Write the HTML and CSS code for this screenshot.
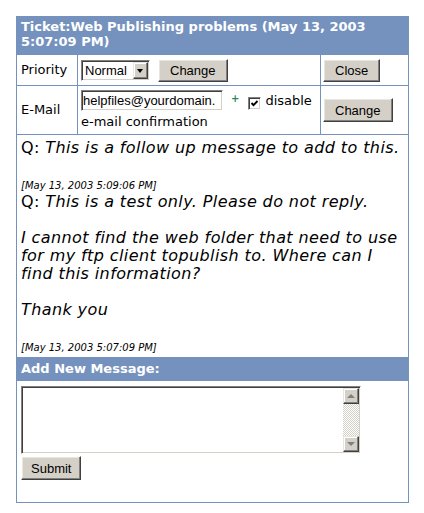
FILE: index.html
```html
<!DOCTYPE html>
<html>
    <head>
        <meta charset="UTF-8">
        <meta name="viewport" content="width=device-width, initial-scale=1.0">
        <title>Ticket</title>
        <link rel="stylesheet" href="styles.css">
    </head>
    <body>
        <div class="ticket">
            <div class="ticket-head">Ticket:Web Publishing problems (May 13, 2003 5:07:09 PM)</div>

            <div class="ticket-props">
                <div class="prop-cell prop-label">Priority</div>
                <div class="prop-cell prop-value">
                    <span class="select-wrap">
                        <select class="field-select" name="priority">
                            <option>Normal</option>
                            <option>High</option>
                            <option>Low</option>
                        </select>
                        <span class="select-arrow"></span>
                    </span>
                    <button class="btn" type="button">Change</button>
                </div>
                <div class="prop-cell prop-action"><button class="btn" type="button">Close</button></div>

                <div class="prop-cell prop-label">E-Mail</div>
                <div class="prop-cell prop-email"><input class="field-text" type="text" name="email" value="helpfiles@yourdomain.com"><span class="add-mark">+</span><span class="check"><svg width="9" height="9" viewBox="0 0 9 9"><polyline points="1.5,4 3.5,6.2 7.5,2" fill="none" stroke="#000" stroke-width="1.9"/></svg></span>disable e-mail confirmation</div>
                <div class="prop-cell prop-action"><button class="btn btn-tall" type="button">Change</button></div>
            </div>

            <div class="messages">
                Q: <i>This is a follow up message to add to this.</i><br><br>
                <span class="stamp">[May 13, 2003 5:09:06 PM]</span><br>
                Q: <i>This is a test only. Please do not reply.<br><br>I cannot find the web folder that need to use for my ftp client topublish to. Where can I find this information?<br><br>Thank you</i><br><br>
                <span class="stamp">[May 13, 2003 5:07:09 PM]</span>
            </div>

            <div class="ticket-head ticket-head-sub">Add New Message:</div>

            <div class="reply">
                <div class="reply-box">
                    <textarea class="reply-text" name="message"></textarea>
                    <div class="scrollbar">
                        <span class="scroll-btn scroll-up"></span>
                        <span class="scroll-track"></span>
                        <span class="scroll-btn scroll-down"></span>
                    </div>
                </div>
                <button class="btn btn-submit" type="submit">Submit</button>
            </div>
        </div>
    </body>
</html>
```

FILE: styles.css
```css
body{
    margin: 0;
    background: #fff;
    color: #000;
    font-family: "DejaVu Sans", Verdana, sans-serif;
    font-size: 13px;
}
.ticket{
    width: 393px;
    margin: 16px;
    border: 1px solid #7592be;
    box-sizing: border-box;
}
.ticket-head{
    background: #7592be;
    color: #fff;
    font-weight: bold;
    font-size: 13px;
    line-height: 15px;
    padding: 2px 4px 5px 4px;
}
.ticket-head-sub{
    padding: 4px 4px 5px 4px;
}

/* priority / e-mail table */
.ticket-props{
    display: grid;
    grid-template-columns: 61px 243px 1fr;
    grid-template-rows: 31px 49px;
    border-top: 1px solid #7592be;
}
.prop-cell{
    display: flex;
    align-items: center;
    box-sizing: border-box;
    border-bottom: 1px solid #7592be;
    line-height: 16px;
}
.prop-label{
    border-right: 1px solid #7592be;
    padding-left: 4px;
}
.prop-value{
    border-right: 1px solid #7592be;
    padding-left: 3px;
    gap: 8px;
}
.prop-email{
    display: block;
    border-right: 1px solid #7592be;
    padding: 4px 0 0 3px;
    line-height: 21px;
}
.prop-action{
    padding-left: 2px;
}

/* classic controls */
.btn{
    height: 23px;
    padding: 0 11px;
    background: #d4d0c8;
    border: 1px solid;
    border-color: #fff #404040 #404040 #fff;
    box-shadow: inset -1px -1px 0 #808080, inset 1px 1px 0 #e8e6e1;
    border-radius: 0;
    font-family: "Liberation Sans", Arial, sans-serif;
    font-size: 13px;
    color: #000;
}
.btn-tall{
    height: 24px;
}
.btn-submit{
    display: block;
    height: 24px;
    padding: 0 9px;
    margin-top: 2px;
}
.select-wrap{
    position: relative;
    display: inline-block;
    height: 21px;
}
.field-select{
    -webkit-appearance: none;
    appearance: none;
    width: 69px;
    height: 21px;
    box-sizing: border-box;
    margin: 0;
    padding: 0 0 0 3px;
    border: 1px solid;
    border-color: #808080 #fff #fff #808080;
    box-shadow: inset 1px 1px 0 #404040, inset -1px -1px 0 #d4d0c8;
    border-radius: 0;
    background: #fff;
    font-family: "Liberation Sans", Arial, sans-serif;
    font-size: 13px;
    color: #000;
    outline: none;
}
.select-arrow{
    position: absolute;
    top: 2px;
    right: 2px;
    width: 15px;
    height: 17px;
    box-sizing: border-box;
    background: #d4d0c8;
    border: 1px solid;
    border-color: #e8e6e1 #404040 #404040 #e8e6e1;
    box-shadow: inset -1px -1px 0 #808080, inset 1px 1px 0 #fff;
}
.select-arrow::after{
    content: "";
    position: absolute;
    left: 3px;
    top: 6px;
    border-left: 3.5px solid transparent;
    border-right: 3.5px solid transparent;
    border-top: 4px solid #000;
}
.field-text{
    width: 142px;
    height: 21px;
    box-sizing: border-box;
    margin: 0;
    padding: 0 7px 0 1px;
    vertical-align: top;
    border: 1px solid;
    border-color: #808080 #fff #fff #808080;
    box-shadow: inset 1px 1px 0 #404040, inset -1px -1px 0 #d4d0c8;
    font-family: "Liberation Sans", Arial, sans-serif;
    font-size: 13px;
    color: #000;
    outline: none;
}
.add-mark{
    display: inline-block;
    margin: 0 9px 0 8px;
    color: #2b8a5c;
    font-weight: bold;
    font-size: 10px;
    line-height: 10px;
    vertical-align: 3px;
}
.check{
    display: inline-flex;
    align-items: center;
    justify-content: center;
    width: 13px;
    height: 13px;
    box-sizing: border-box;
    margin-right: 4px;
    vertical-align: -3px;
    background: #fff;
    border: 1px solid;
    border-color: #808080 #fff #fff #808080;
    box-shadow: inset 1px 1px 0 #404040, inset -1px -1px 0 #d4d0c8;
}

/* messages */
.messages{
    padding: 4px 4px 2px 4px;
    font-size: 16px;
    line-height: 18px;
    letter-spacing: 0.4px;
}
.stamp{
    font-size: 10px;
    line-height: 10px;
    font-style: italic;
    letter-spacing: 0;
}

/* reply form */
.reply{
    padding: 5px 4px 22px 4px;
}
.reply-box{
    display: flex;
    width: 340px;
    height: 68px;
    box-sizing: border-box;
    border: 1px solid;
    border-color: #808080 #fff #fff #808080;
    box-shadow: inset 1px 1px 0 #404040, inset -1px -1px 0 #d4d0c8;
    padding: 1px;
    background: #fff;
}
.reply-text{
    flex: 1;
    border: none;
    resize: none;
    outline: none;
    padding: 2px;
    margin: 0;
    overflow: hidden;
    font-family: "Liberation Sans", Arial, sans-serif;
    font-size: 13px;
}
.scrollbar{
    display: flex;
    flex-direction: column;
    width: 16px;
}
.scroll-btn{
    position: relative;
    height: 16px;
    box-sizing: border-box;
    background: #d4d0c8;
    border: 1px solid;
    border-color: #e8e6e1 #404040 #404040 #e8e6e1;
    box-shadow: inset -1px -1px 0 #808080, inset 1px 1px 0 #fff;
}
.scroll-btn::after{
    content: "";
    position: absolute;
    left: 3px;
    top: 5px;
    border-left: 4px solid transparent;
    border-right: 4px solid transparent;
}
.scroll-up::after{
    border-bottom: 4px solid #808080;
}
.scroll-down::after{
    border-top: 4px solid #808080;
}
.scroll-track{
    flex: 1;
    background: repeating-conic-gradient(#d4d0c8 0 25%, #fff 0 50%);
    background-size: 2px 2px;
}
```
